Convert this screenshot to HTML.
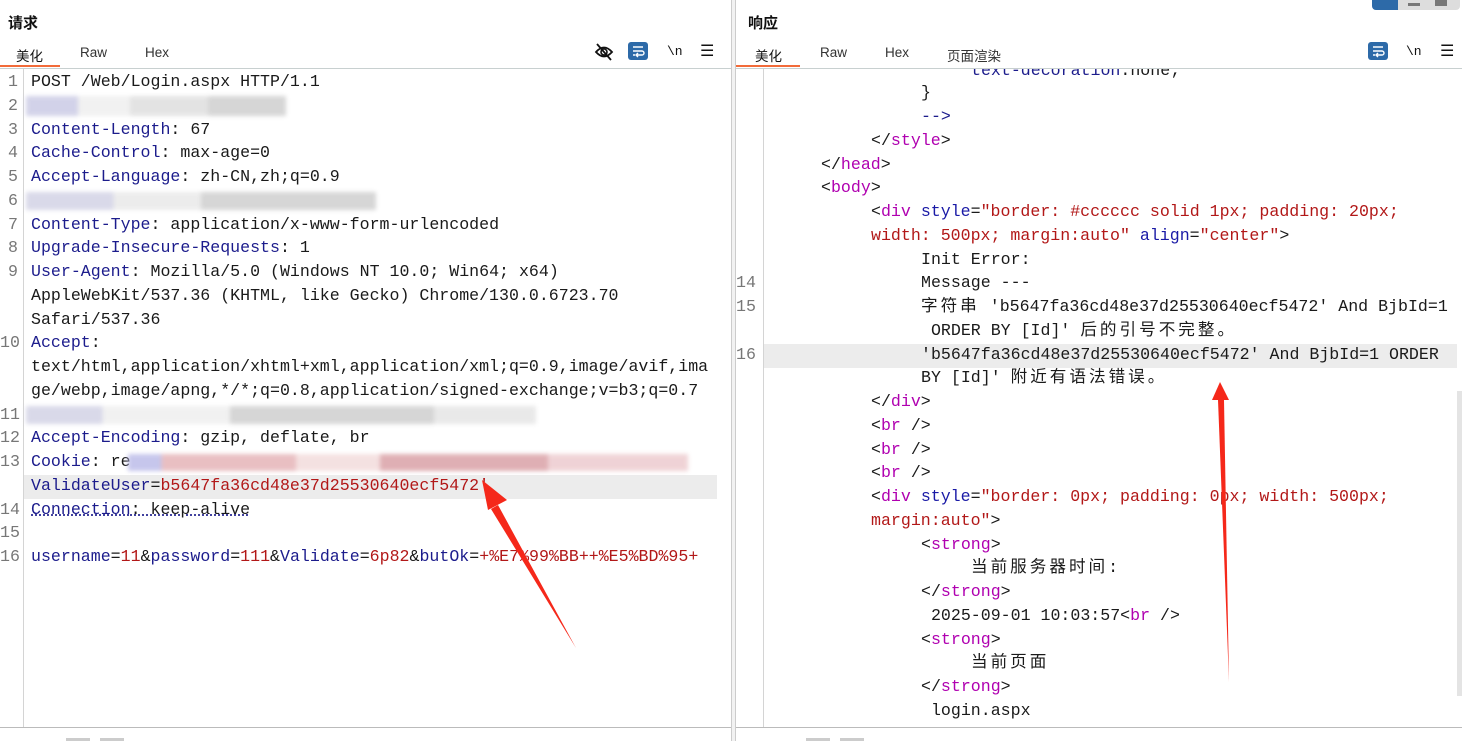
<!DOCTYPE html>
<html><head><meta charset="utf-8"><style>
*{margin:0;padding:0;box-sizing:border-box}
body{width:1462px;height:741px;overflow:hidden;background:#fff;position:relative;font-family:"Liberation Sans","Noto Sans CJK SC",sans-serif;color:#222}
.a{position:absolute}
.ln{position:absolute;white-space:pre;font-family:"Liberation Mono","Noto Sans CJK SC",monospace;font-size:16.6px;line-height:24px;height:24px;color:#1a1a1a}
.n{position:absolute;font-family:"Liberation Mono",monospace;font-size:16.6px;line-height:24px;color:#777}
.k{color:#1c1c8c}.r{color:#b21818}.t{color:#b000b0}.b{color:#1a1aa6}
.c{letter-spacing:3px}
.tab{position:absolute;top:45px;font-size:13.5px;color:#333}
.blur{position:absolute;filter:blur(2px);opacity:.8}
</style></head><body>
<!-- header left -->
<div class="a" style="left:8px;top:12px;font-size:15px;font-weight:bold;color:#111">请求</div>
<div class="tab" style="left:16px;color:#111">美化</div>
<div class="tab" style="left:80px">Raw</div>
<div class="tab" style="left:145px">Hex</div>
<div class="a" style="left:0;top:65px;width:60px;height:2px;background:#f26b3a"></div>
<div class="a" style="left:0;top:68px;width:731px;height:1px;background:#c8d0d0"></div>
<svg class="a" style="left:594px;top:42px" width="22" height="20" viewBox="0 0 22 20"><path d="M2 10 Q10 1 18 10 Q10 19 2 10Z" fill="none" stroke="#111" stroke-width="1.8"/><circle cx="10" cy="10" r="3" fill="none" stroke="#111" stroke-width="1.6"/><path d="M3 2 L17 18" stroke="#111" stroke-width="1.8"/></svg>
<div class="a" style="left:628px;top:42px;width:20px;height:18px;background:#2d6aa8;border-radius:3px"></div>
<svg class="a" style="left:628px;top:42px" width="20" height="18"><path d="M5 5H15M5 9H14a2 2 0 0 1 0 4H9M5 13H7M10 11l-2 2 2 2" stroke="#fff" stroke-width="1.4" fill="none"/></svg>
<div class="a" style="left:667px;top:44px;font-size:13px;color:#111;font-family:'Liberation Mono'">\n</div>
<div class="a" style="left:700px;top:41px;font-size:16px;color:#111">☰</div>
<!-- left gutter -->
<div class="a" style="left:23px;top:69px;width:1px;height:658px;background:#d4d4d4"></div>
<div class="a" style="left:24px;top:475px;width:693px;height:24px;background:#ececec"></div>
<div class="n" style="left:8px;top:70px">1</div>
<div class="n" style="left:8px;top:94px">2</div>
<div class="n" style="left:8px;top:118px">3</div>
<div class="n" style="left:8px;top:141px">4</div>
<div class="n" style="left:8px;top:165px">5</div>
<div class="n" style="left:8px;top:189px">6</div>
<div class="n" style="left:8px;top:213px">7</div>
<div class="n" style="left:8px;top:236px">8</div>
<div class="n" style="left:8px;top:260px">9</div>
<div class="n" style="left:0px;top:331px">10</div>
<div class="n" style="left:0px;top:403px">11</div>
<div class="n" style="left:0px;top:426px">12</div>
<div class="n" style="left:0px;top:450px">13</div>
<div class="n" style="left:0px;top:498px">14</div>
<div class="n" style="left:0px;top:521px">15</div>
<div class="n" style="left:0px;top:545px">16</div>
<div class="ln" style="left:31px;top:70px">POST /Web/Login.aspx HTTP/1.1</div>
<div class="blur" style="left:26px;top:96px;width:260px;height:20px;background:linear-gradient(90deg,#c8c8e4 0 20%,#eee 20% 40%,#ddd 40% 70%,#ccc 70%)"></div>
<div class="ln" style="left:31px;top:118px"><span class="k">Content-Length</span>: 67</div>
<div class="ln" style="left:31px;top:141px"><span class="k">Cache-Control</span>: max-age=0</div>
<div class="ln" style="left:31px;top:165px"><span class="k">Accept-Language</span>: zh-CN,zh;q=0.9</div>
<div class="blur" style="left:26px;top:192px;width:350px;height:18px;background:linear-gradient(90deg,#d0d0e4 0 25%,#e8e8e8 25% 50%,#ccc 50%)"></div>
<div class="ln" style="left:31px;top:213px"><span class="k">Content-Type</span>: application/x-www-form-urlencoded</div>
<div class="ln" style="left:31px;top:236px"><span class="k">Upgrade-Insecure-Requests</span>: 1</div>
<div class="ln" style="left:31px;top:260px"><span class="k">User-Agent</span>: Mozilla/5.0 (Windows NT 10.0; Win64; x64)</div>
<div class="ln" style="left:31px;top:284px">AppleWebKit/537.36 (KHTML, like Gecko) Chrome/130.0.6723.70</div>
<div class="ln" style="left:31px;top:308px">Safari/537.36</div>
<div class="ln" style="left:31px;top:331px"><span class="k">Accept</span>:</div>
<div class="ln" style="left:31px;top:355px">text/html,application/xhtml+xml,application/xml;q=0.9,image/avif,ima</div>
<div class="ln" style="left:31px;top:379px">ge/webp,image/apng,*/*;q=0.8,application/signed-exchange;v=b3;q=0.7</div>
<div class="blur" style="left:26px;top:406px;width:510px;height:18px;background:linear-gradient(90deg,#d0d0e4 0 15%,#eee 15% 40%,#ccc 40% 80%,#e4e4e4 80%)"></div>
<div class="ln" style="left:31px;top:426px"><span class="k">Accept-Encoding</span>: gzip, deflate, br</div>
<div class="ln" style="left:31px;top:450px"><span class="k">Cookie</span>: re</div>
<div class="blur" style="left:128px;top:454px;width:560px;height:17px;background:linear-gradient(90deg,#b8b8e8 0 6%,#e4b0b4 6% 30%,#f2dada 30% 45%,#d89ca2 45% 75%,#ecc8cc 75%)"></div>
<div class="ln" style="left:31px;top:474px"><span class="k">ValidateUser</span>=<span class="r">b5647fa36cd48e37d25530640ecf5472'</span></div>
<div class="ln" style="left:31px;top:498px;text-decoration:underline dotted #1c1c8c"><span class="k">Connection</span>: keep-alive</div>
<div class="ln" style="left:31px;top:545px"><span class="k">username</span>=<span class="r">11</span>&amp;<span class="k">password</span>=<span class="r">111</span>&amp;<span class="k">Validate</span>=<span class="r">6p82</span>&amp;<span class="k">butOk</span>=<span class="r">+%E7%99%BB++%E5%BD%95+</span></div>
<div class="a" style="left:0;top:727px;width:731px;height:1px;background:#bbb"></div>
<div class="a" style="left:66px;top:738px;width:24px;height:3px;background:#ccc"></div>
<div class="a" style="left:100px;top:738px;width:24px;height:3px;background:#ccc"></div>
<!-- divider -->
<div class="a" style="left:731px;top:0;width:5px;height:741px;background:#f2f2f2;border-left:1px solid #ccc;border-right:1px solid #ccc"></div>
<!-- right header -->
<div class="a" style="left:1372px;top:0;width:88px;height:10px;background:#ddd;border-radius:0 0 4px 4px"></div>
<div class="a" style="left:1372px;top:0;width:26px;height:10px;background:#2d6aa8;border-radius:0 0 0 4px"></div>
<div class="a" style="left:1408px;top:3px;width:12px;height:3px;background:#777"></div>
<div class="a" style="left:1435px;top:0;width:12px;height:6px;background:#777"></div>
<div class="a" style="left:748px;top:12px;font-size:15px;font-weight:bold;color:#111">响应</div>
<div class="tab" style="left:755px;color:#111">美化</div>
<div class="tab" style="left:820px">Raw</div>
<div class="tab" style="left:885px">Hex</div>
<div class="tab" style="left:947px">页面渲染</div>
<div class="a" style="left:736px;top:65px;width:64px;height:2px;background:#f26b3a"></div>
<div class="a" style="left:736px;top:68px;width:726px;height:1px;background:#c8d0d0"></div>
<div class="a" style="left:1368px;top:42px;width:20px;height:18px;background:#2d6aa8;border-radius:3px"></div>
<svg class="a" style="left:1368px;top:42px" width="20" height="18"><path d="M5 5H15M5 9H14a2 2 0 0 1 0 4H9M5 13H7M10 11l-2 2 2 2" stroke="#fff" stroke-width="1.4" fill="none"/></svg>
<div class="a" style="left:1406px;top:44px;font-size:13px;color:#111;font-family:'Liberation Mono'">\n</div>
<div class="a" style="left:1440px;top:41px;font-size:16px;color:#111">☰</div>
<!-- right code -->
<div class="a" style="left:736px;top:69px;width:726px;height:658px;overflow:hidden">
<div class="a" style="left:27px;top:0;width:1px;height:658px;background:#d4d4d4"></div>
<div class="a" style="left:28px;top:275px;width:693px;height:24px;background:#ececec"></div>
<div class="a" style="left:721px;top:322px;width:5px;height:305px;background:#e4e4e4"></div>
<div class="n" style="left:0;top:202px">14</div>
<div class="n" style="left:0;top:226px">15</div>
<div class="n" style="left:0;top:274px">16</div>
<div class="ln" style="left:235px;top:-10px"><span class="k">text-decoration</span>:none;</div>
<div class="ln" style="left:185px;top:12px">}</div>
<div class="ln" style="left:185px;top:36px"><span class="k">--&gt;</span></div>
<div class="ln" style="left:135px;top:60px">&lt;/<span class="t">style</span>&gt;</div>
<div class="ln" style="left:85px;top:84px">&lt;/<span class="t">head</span>&gt;</div>
<div class="ln" style="left:85px;top:107px">&lt;<span class="t">body</span>&gt;</div>
<div class="ln" style="left:135px;top:131px">&lt;<span class="t">div</span> <span class="b">style</span>=<span class="r">"border: #cccccc solid 1px; padding: 20px;</span></div>
<div class="ln" style="left:135px;top:155px"><span class="r">width: 500px; margin:auto"</span> <span class="b">align</span>=<span class="r">"center"</span>&gt;</div>
<div class="ln" style="left:185px;top:179px">Init Error:</div>
<div class="ln" style="left:185px;top:202px">Message ---</div>
<div class="ln" style="left:185px;top:226px"><span class="c">字符串</span> 'b5647fa36cd48e37d25530640ecf5472' And BjbId=1</div>
<div class="ln" style="left:185px;top:250px"> ORDER BY [Id]' <span class="c">后的引号不完整。</span></div>
<div class="ln" style="left:185px;top:274px">'b5647fa36cd48e37d25530640ecf5472' And BjbId=1 ORDER</div>
<div class="ln" style="left:185px;top:297px">BY [Id]' <span class="c">附近有语法错误。</span></div>
<div class="ln" style="left:135px;top:321px">&lt;/<span class="t">div</span>&gt;</div>
<div class="ln" style="left:135px;top:345px">&lt;<span class="t">br</span> /&gt;</div>
<div class="ln" style="left:135px;top:369px">&lt;<span class="t">br</span> /&gt;</div>
<div class="ln" style="left:135px;top:392px">&lt;<span class="t">br</span> /&gt;</div>
<div class="ln" style="left:135px;top:416px">&lt;<span class="t">div</span> <span class="b">style</span>=<span class="r">"border: 0px; padding: 0px; width: 500px;</span></div>
<div class="ln" style="left:135px;top:440px"><span class="r">margin:auto"</span>&gt;</div>
<div class="ln" style="left:185px;top:464px">&lt;<span class="t">strong</span>&gt;</div>
<div class="ln" style="left:235px;top:487px"><span class="c">当前服务器时间</span>:</div>
<div class="ln" style="left:185px;top:511px">&lt;/<span class="t">strong</span>&gt;</div>
<div class="ln" style="left:185px;top:535px"> 2025-09-01 10:03:57&lt;<span class="t">br</span> /&gt;</div>
<div class="ln" style="left:185px;top:559px">&lt;<span class="t">strong</span>&gt;</div>
<div class="ln" style="left:235px;top:582px"><span class="c">当前页面</span></div>
<div class="ln" style="left:185px;top:606px">&lt;/<span class="t">strong</span>&gt;</div>
<div class="ln" style="left:185px;top:630px"> login.aspx</div>
</div>
<div class="a" style="left:736px;top:727px;width:726px;height:1px;background:#bbb"></div>
<div class="a" style="left:806px;top:738px;width:24px;height:3px;background:#ccc"></div>
<div class="a" style="left:840px;top:738px;width:24px;height:3px;background:#ccc"></div>
<!-- arrows -->
<svg class="a" style="left:0;top:0" width="1462" height="741">
<polygon points="576,648 498,505 491,509" fill="#f5281a"/>
<polygon points="482,480 507,500 488,510" fill="#f5281a"/>
<polygon points="1229,682 1224,400 1218,400" fill="#f5281a"/>
<polygon points="1220,382 1229,400 1212,400" fill="#f5281a"/>
</svg>
</body></html>
